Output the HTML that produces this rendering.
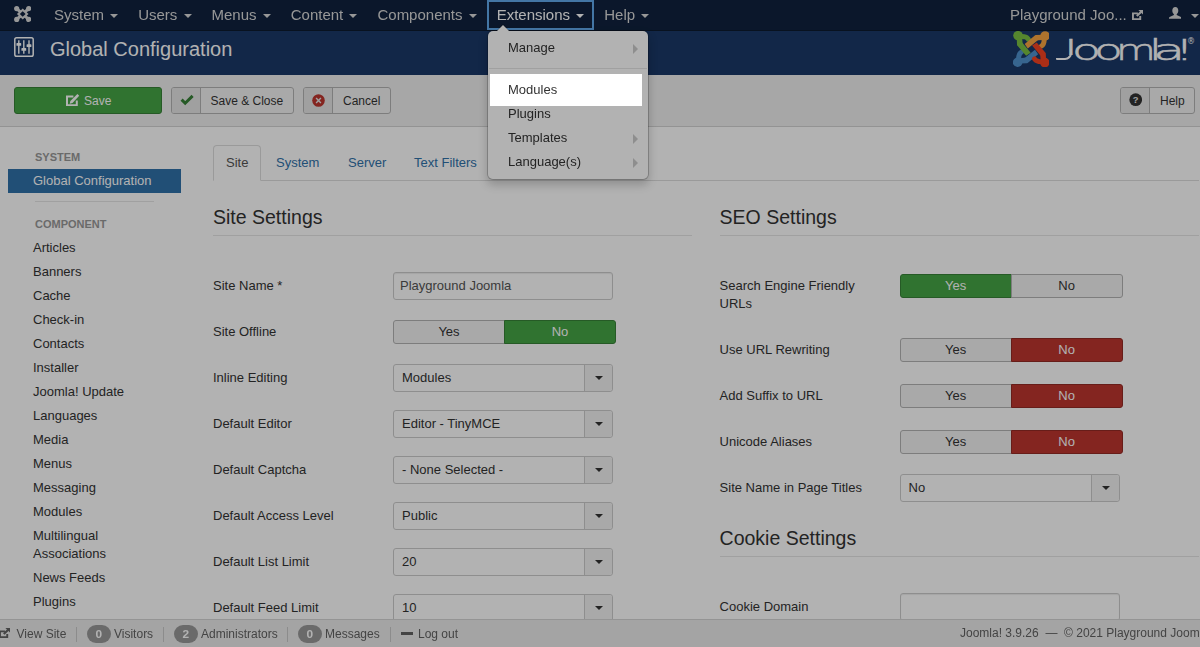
<!DOCTYPE html>
<html lang="en">
<head>
<meta charset="utf-8">
<title>Playground Joomla - Administration - Global Configuration</title>
<style>
*{box-sizing:content-box}
html,body{margin:0;padding:0}
body{width:1200px;height:647px;overflow:hidden;position:relative;background:#fff;font-family:"Liberation Sans",Arial,Helvetica,sans-serif;font-size:13px;line-height:18px;color:#333}
a{color:#3071a9;text-decoration:none}
#page{position:absolute;left:0;top:0;width:1216px;height:647px;overflow:hidden}

/* ---------- navbar ---------- */
.navbar{will-change:transform;position:absolute;left:0;top:0;width:1216px;height:30px;background:#10223e;border-bottom:1px solid #0c1a2f}
.navbar .brand{position:absolute;left:13.6px;top:5.9px;width:17.4px;height:16px}
.nav{position:absolute;left:44px;top:0;margin:0;padding:0;list-style:none;white-space:nowrap;font-size:0}
.nav>li{display:inline-block;font-size:15px;line-height:18px;padding:6px 10px;color:#d9d9d9;position:relative}
.caret{display:inline-block;width:0;height:0;vertical-align:top;margin-top:8px;margin-left:2px;border-top:4px solid #d9d9d9;border-left:4px solid transparent;border-right:4px solid transparent}
.nav>li.open{color:#fff}
.nav>li.open .caret{border-top-color:#fff}
.nav>li.open:after{content:"";position:absolute;left:0;top:0;right:0;bottom:0;border:2px solid #61a9ec}
.navright{position:absolute;top:0;right:0;height:30px}
.nvi{position:absolute}
.sitename{position:absolute;left:1010px;top:6px;font-size:15px;line-height:18px;color:#d9d9d9;white-space:nowrap}

/* ---------- header ---------- */
.header{position:absolute;left:0;top:31px;width:1216px;height:44px;background:#1a3867}
.header h1{position:absolute;left:50px;top:0;margin:0;font-size:20px;line-height:36px;font-weight:normal;color:#fff;white-space:nowrap}
.header .ticon{position:absolute;left:13.8px;top:6.2px;width:20px;height:20px}
.jlogo{position:absolute;left:1012.7px;top:-0.2px;width:36.8px;height:36.2px}
.wordmark{position:absolute;left:0;top:1px;font-family:"DejaVu Sans Light","DejaVu Sans",sans-serif;font-weight:200;font-size:29.2px;line-height:36px;color:#fff;-webkit-text-stroke:0.55px #fff;white-space:nowrap}
.jfoot{position:absolute;left:1055.6px;top:17.6px;width:14.2px;height:9px;border-bottom:2.5px solid #fff;border-right:2.8px solid #fff;border-radius:0 0 7px 1px}
.wordmark span{position:absolute;top:0;transform-origin:0 0}
.wordmark .reg{font-family:"DejaVu Sans",sans-serif;font-weight:400;font-size:8px;line-height:10px;top:5px;-webkit-text-stroke:0}

/* ---------- subhead / toolbar ---------- */
.subhead{position:absolute;left:0;top:75px;width:1216px;height:51px;background:#f0f0f0;border-bottom:1px solid #d3d3d3}
.tbtn{position:absolute;top:12px;height:25px;line-height:25px;font-size:12px;border:1px solid #b3b3b3;border-radius:3px;background:#f3f3f3;color:#333;white-space:nowrap;overflow:hidden}
.tbtn .ib{position:absolute;left:0;top:0;width:28px;height:25px;background:#e6e6e6;border-right:1px solid #b3b3b3}
.tbtn .tx{position:absolute;top:1px}
.tbtn svg{position:absolute}

/* ---------- sidebar ---------- */
.sidebar{position:absolute;left:8px;top:145px;width:173px}
.sidebar ul{margin:0;padding:0;list-style:none}
.sidebar li{padding:3px 25px 3px 25px;line-height:18px;color:#333}
.sidebar li.nav-header{font-size:11px;font-weight:bold;color:#999;text-shadow:0 1px 0 rgba(255,255,255,.5);text-transform:uppercase;padding-left:27px;letter-spacing:0}
.sidebar li.active{background:#3071a9;color:#fff;padding-left:25px}
.sidebar li.divider{height:1px;padding:0;margin:8px 27px 9px 27px;background:#e5e5e5;border-bottom:1px solid #fff}

/* ---------- content ---------- */
.tabs{position:absolute;left:213px;top:145px;width:986px;height:35px;border-bottom:1px solid #ddd}
.tabs span{position:absolute;top:0;height:18px;padding:8px 12px;line-height:18px;color:#3071a9;border:1px solid transparent}
.tabs span.active{color:#555;background:#fff;border:1px solid #ddd;border-bottom-color:#fff;border-radius:4px 4px 0 0}
.col{position:absolute;top:199px}
.col1{left:213px;width:479px}
.col2{left:719.6px;width:479.4px}
legend,.legend{display:block;font-size:19.5px;line-height:36px;height:36px;color:#333;border-bottom:1px solid #e5e5e5;margin:0 0 36px 0;padding:0;white-space:nowrap}
.cg{position:relative;min-height:28px;margin-bottom:18px}
.cg label{display:block;width:160px;padding:5px 0;line-height:18px}
.cg .c{position:absolute;left:180px;top:0}
.inp{width:206px;height:18px;padding:4px 6px;border:1px solid #ccc;border-radius:3px;background:#fff;line-height:18px;color:#555;box-shadow:inset 0 1px 1px rgba(0,0,0,.075)}
.sel{position:relative;width:218px;height:26px;line-height:26px;border:1px solid #ccc;border-radius:3px;background:#fff;color:#333}
.sel .t{position:absolute;left:8px;top:0}
.sel .a{position:absolute;right:0;top:0;width:27px;height:26px;background:#f3f3f3;border-left:1px solid #ccc;border-radius:0 3px 3px 0}
.sel .a i{position:absolute;left:10px;top:11px;width:0;height:0;border-top:4px solid #333;border-left:4px solid transparent;border-right:4px solid transparent}
.tog{position:absolute;left:0;top:2px;width:224px;height:24px;white-space:nowrap;font-size:0}
.tog span{display:inline-block;width:110px;height:18px;padding:2px 0;line-height:18px;font-size:13px;text-align:center;border:1px solid #b3b3b3;background:#f3f3f3;color:#333}
.tog span:first-child{border-radius:3px 0 0 3px}
.tog span:last-child{border-radius:0 3px 3px 0;margin-left:-1px}
.tog span.g{background:#46a546;border-color:#378137;color:#fff}
.tog span.r{background:#bd362f;border-color:#942a25;color:#fff}

/* ---------- status ---------- */
#status{will-change:transform;position:absolute;left:0;top:619px;width:1216px;height:27px;background:#ebebeb;border-top:1px solid #d4d4d4;font-size:12px;line-height:18px;color:#626262}
#status .sti{position:absolute}
#status .it{position:absolute;top:5px;white-space:nowrap}
#status .dv{position:absolute;top:7px;width:0;height:15px;border-left:1px solid #c9c9c9}
.badge{position:absolute;top:5px;height:14px;padding:2px 8.5px 1.5px;line-height:14px;font-size:11.844px;font-weight:bold;color:#fff;background:#999;border-radius:9px}

/* ---------- dropdown ---------- */
.dd{will-change:transform;position:absolute;left:486.6px;top:30px;width:160px;padding:5px 0;background:#fff;background-clip:padding-box;border:1px solid rgba(0,0,0,.2);border-radius:6px;box-shadow:0 5px 10px rgba(0,0,0,.2)}
.dd div.i{padding:3px 20px;line-height:18px;color:#333;position:relative}
.dd div.i.sub:after{content:"";position:absolute;right:10px;top:8px;border-style:solid;border-width:5px 0 5px 5px;border-color:transparent transparent transparent #ccc}
.dd div.d{height:1px;margin:8px 1px 8px;background:#e5e5e5;border-bottom:1px solid #fff}
.dd:before{content:"";position:absolute;left:8px;top:-7px;border-left:7px solid transparent;border-right:7px solid transparent;border-bottom:7px solid rgba(0,0,0,.2)}
.dd:after{content:"";position:absolute;left:9px;top:-6px;border-left:6px solid transparent;border-right:6px solid transparent;border-bottom:6px solid #fff}

/* ---------- overlay ---------- */
.spot{position:absolute;left:490px;top:74px;width:152px;height:32px;box-shadow:0 0 0 3000px rgba(0,0,0,.3);pointer-events:none;z-index:100}
</style>
</head>
<body>
<div id="page">

<div class="navbar">
  <svg class="brand" viewBox="0 0 17.4 16"><g stroke="#d9d9d9" stroke-width="3" stroke-linecap="round"><path d="M3 2.8L14.4 13.2M14.4 2.8L3 13.2"/></g><g fill="#d9d9d9"><circle cx="2.7" cy="2.6" r="2.6"/><circle cx="14.7" cy="2.6" r="2.6"/><circle cx="2.7" cy="13.4" r="2.6"/><circle cx="14.7" cy="13.4" r="2.6"/><path d="M8.7 2.6L14.5 8 8.7 13.4 2.9 8Z"/></g><path d="M8.7 5.3L11.6 8 8.7 10.7 5.8 8Z" fill="#10223e"/></svg>
  <ul class="nav">
    <li>System <b class="caret"></b></li><li>Users <b class="caret"></b></li><li>Menus <b class="caret"></b></li><li>Content <b class="caret"></b></li><li>Components <b class="caret"></b></li><li class="open">Extensions <b class="caret"></b></li><li>Help <b class="caret"></b></li>
  </ul>
  <div class="sitename">Playground Joo...</div><svg class="nvi" style="left:1131.6px;top:9.8px" width="11.5" height="10.2" viewBox="0 0 12 11" preserveAspectRatio="none"><path d="M6.2 3.7H1V10H8.6V6.6" fill="none" stroke="#d9d9d9" stroke-width="2"/><path d="M6.6 0H11.6V5L9.9 3.3 5.8 7.4 4.2 5.8 8.3 1.7Z" fill="#d9d9d9"/></svg><svg class="nvi" style="left:1168.6px;top:7.4px" width="12.6" height="11.8" viewBox="0 0 12.6 11.8"><path d="M6.3 0C8.2 0 9.3 1.5 9.3 3.6 9.3 5.2 8.6 6.5 7.7 7.2V8.1L12 9.9Q12.6 10.2 12.6 10.9V11.8H0V10.9Q0 10.2 0.6 9.9L4.9 8.1V7.2C4 6.5 3.3 5.2 3.3 3.6 3.3 1.5 4.4 0 6.3 0Z" fill="#d9d9d9"/></svg><b class="caret" style="position:absolute;left:1191px;top:6px;margin-left:0"></b>
</div>

<div class="header">
  <svg class="ticon" viewBox="0 0 20 20"><rect x="0.8" y="0.8" width="18.4" height="18.4" rx="1.8" fill="none" stroke="#fff" stroke-width="1.5"/><g stroke="#fff" stroke-width="1.4"><path d="M4.8 3.2V16.8M9.8 3.2V16.8M15 3.2V16.8"/></g><g fill="#fff"><rect x="2.4" y="6.1" width="4.8" height="2.7" rx=".6"/><rect x="7.4" y="11.1" width="4.8" height="2.7" rx=".6"/><rect x="12.6" y="7.3" width="4.8" height="2.7" rx=".6"/></g></svg>
  <h1>Global Configuration</h1>
  <svg class="jlogo" viewBox="0 0 36.8 36.8" preserveAspectRatio="none"><g transform="rotate(270 18.4 18.4)"><path d="M3.7,6 L4,14.2 Q4.1,14.6 4.5,15 L13.1,25.1 L17.7,22 L10,12.6 Q9.6,12 9.5,11.4 L9.1,6 Z" fill="#5091cd"/><path d="M5,5.4 L11,5.8 Q14.2,6.4 15.3,8.4" fill="none" stroke="#5091cd" stroke-width="5" stroke-linecap="round"/><circle cx="5" cy="4.7" r="4.8" fill="#5091cd"/></g><g transform="rotate(0 18.4 18.4)"><path d="M3.7,6 L4,14.2 Q4.1,14.6 4.5,15 L13.1,25.1 L17.7,22 L10,12.6 Q9.6,12 9.5,11.4 L9.1,6 Z" fill="#7ac143"/><path d="M5,5.4 L11,5.8 Q14.2,6.4 15.3,8.4" fill="none" stroke="#7ac143" stroke-width="5" stroke-linecap="round"/><circle cx="5" cy="4.7" r="4.8" fill="#7ac143"/></g><g transform="rotate(90 18.4 18.4)"><path d="M3.7,6 L4,14.2 Q4.1,14.6 4.5,15 L13.1,25.1 L17.7,22 L10,12.6 Q9.6,12 9.5,11.4 L9.1,6 Z" fill="#f9a541"/><path d="M5,5.4 L11,5.8 Q14.2,6.4 15.3,8.4" fill="none" stroke="#f9a541" stroke-width="5" stroke-linecap="round"/><circle cx="5" cy="4.7" r="4.8" fill="#f9a541"/></g><g transform="rotate(180 18.4 18.4)"><path d="M3.7,6 L4,14.2 Q4.1,14.6 4.5,15 L13.1,25.1 L17.7,22 L10,12.6 Q9.6,12 9.5,11.4 L9.1,6 Z" fill="#f44321"/><path d="M5,5.4 L11,5.8 Q14.2,6.4 15.3,8.4" fill="none" stroke="#f44321" stroke-width="5" stroke-linecap="round"/><circle cx="5" cy="4.7" r="4.8" fill="#f44321"/></g></svg>
  <div class="jfoot"></div><div class="wordmark"><span style="left:1064.0px;transform:scaleX(1.60);height:23.4px;overflow:hidden">J</span><span style="left:1071.6px;transform:scaleX(1.62)">o</span><span style="left:1093.6px;transform:scaleX(1.62)">o</span><span style="left:1115.5px;transform:scaleX(1.40)">m</span><span style="left:1148.6px;transform:scaleX(1.60)">l</span><span style="left:1153.2px;transform:scaleX(1.81)">a</span><span style="left:1174.5px;transform:scaleX(1.60)">!</span><span class="reg" style="left:1187px">®</span></div>
</div>

<div class="subhead">
  <div class="tbtn" style="left:14px;width:146px;background:#46a546;border-color:#378137;color:#fff"><svg style="left:51.2px;top:6.2px" width="13.4" height="12.2" viewBox="0 0 13.4 12.2"><path d="M7.4 2.6H1V11.2H10.8V6.4" fill="none" stroke="#fff" stroke-width="2"/><path d="M13.2 1.8L11.4 0 4.4 6.9 3.7 9.7 6.5 9Z" fill="#fff"/></svg><span class="tx" style="left:69px">Save</span></div>
  <div class="tbtn" style="left:171px;width:121px"><span class="ib"></span><svg style="left:7.5px;top:6px" width="14" height="12" viewBox="0 0 14 12"><path d="M1.6 5.6L5.2 9.2 12.6 1.9" fill="none" stroke="#378137" stroke-width="3"/></svg><span class="tx" style="left:38.5px">Save &amp; Close</span></div>
  <div class="tbtn" style="left:303px;width:86px"><span class="ib"></span><svg style="left:7.6px;top:5.6px" width="13" height="13" viewBox="0 0 13 13"><circle cx="6.5" cy="6.5" r="6.3" fill="#bd362f"/><path d="M4.1 4.1L8.9 8.9M8.9 4.1L4.1 8.9" stroke="#e6e6e6" stroke-width="1.4"/></svg><span class="tx" style="left:39px">Cancel</span></div>
  <div class="tbtn" style="left:1120px;width:73px"><span class="ib"></span><svg style="left:7.6px;top:5.2px" width="13.4" height="13.4" viewBox="0 0 13.4 13.4"><circle cx="6.7" cy="6.7" r="6.4" fill="#333"/><text x="6.7" y="10" text-anchor="middle" font-family="Liberation Sans,Arial,sans-serif" font-weight="bold" font-size="9.4" fill="#e6e6e6">?</text></svg><span class="tx" style="left:39px">Help</span></div>
</div>

<div class="sidebar">
  <ul>
    <li class="nav-header">System</li>
    <li class="active">Global Configuration</li>
    <li class="divider"></li>
    <li class="nav-header">Component</li>
    <li>Articles</li><li>Banners</li><li>Cache</li><li>Check-in</li><li>Contacts</li><li>Installer</li><li>Joomla! Update</li><li>Languages</li><li>Media</li><li>Menus</li><li>Messaging</li><li>Modules</li><li>Multilingual Associations</li><li>News Feeds</li><li>Plugins</li><li>Post-installation Messages</li>
  </ul>
</div>

<div class="tabs">
  <span class="active" style="left:0">Site</span>
  <span style="left:50px">System</span>
  <span style="left:122px">Server</span>
  <span style="left:188px">Text Filters</span>
</div>

<div class="col col1">
  <div class="legend">Site Settings</div>
  <div class="cg"><label>Site Name *</label><div class="c"><div class="inp">Playground Joomla</div></div></div>
  <div class="cg"><label>Site Offline</label><div class="c"><div class="tog"><span>Yes</span><span class="g">No</span></div></div></div>
  <div class="cg"><label>Inline Editing</label><div class="c"><div class="sel"><span class="t">Modules</span><span class="a"><i></i></span></div></div></div>
  <div class="cg"><label>Default Editor</label><div class="c"><div class="sel"><span class="t">Editor - TinyMCE</span><span class="a"><i></i></span></div></div></div>
  <div class="cg"><label>Default Captcha</label><div class="c"><div class="sel"><span class="t">- None Selected -</span><span class="a"><i></i></span></div></div></div>
  <div class="cg"><label>Default Access Level</label><div class="c"><div class="sel"><span class="t">Public</span><span class="a"><i></i></span></div></div></div>
  <div class="cg"><label>Default List Limit</label><div class="c"><div class="sel"><span class="t">20</span><span class="a"><i></i></span></div></div></div>
  <div class="cg"><label>Default Feed Limit</label><div class="c"><div class="sel"><span class="t">10</span><span class="a"><i></i></span></div></div></div>
</div>

<div class="col col2">
  <div class="legend">SEO Settings</div>
  <div class="cg"><label>Search Engine Friendly URLs</label><div class="c"><div class="tog"><span class="g">Yes</span><span>No</span></div></div></div>
  <div class="cg"><label>Use URL Rewriting</label><div class="c"><div class="tog"><span>Yes</span><span class="r">No</span></div></div></div>
  <div class="cg"><label>Add Suffix to URL</label><div class="c"><div class="tog"><span>Yes</span><span class="r">No</span></div></div></div>
  <div class="cg"><label>Unicode Aliases</label><div class="c"><div class="tog"><span>Yes</span><span class="r">No</span></div></div></div>
  <div class="cg"><label>Site Name in Page Titles</label><div class="c"><div class="sel"><span class="t">No</span><span class="a"><i></i></span></div></div></div>
  <div class="legend">Cookie Settings</div>
  <div class="cg"><label>Cookie Domain</label><div class="c"><div class="inp"></div></div></div>
</div>

<div id="status">
  <svg class="sti" style="left:-1.2px;top:8px" width="11.5" height="10.2" viewBox="0 0 12 11" preserveAspectRatio="none"><path d="M6.2 3.7H1V10H8.6V6.6" fill="none" stroke="#626262" stroke-width="2"/><path d="M6.6 0H11.6V5L9.9 3.3 5.8 7.4 4.2 5.8 8.3 1.7Z" fill="#626262"/></svg><span class="it" style="left:16.5px">View Site</span>
  <span class="dv" style="left:76px"></span>
  <span class="badge" style="left:87px">0</span>
  <span class="it" style="left:114px">Visitors</span>
  <span class="dv" style="left:163px"></span>
  <span class="badge" style="left:174px">2</span>
  <span class="it" style="left:201px">Administrators</span>
  <span class="dv" style="left:287px"></span>
  <span class="badge" style="left:298px">0</span>
  <span class="it" style="left:325px">Messages</span>
  <span class="dv" style="left:390px"></span>
  <span class="sti" style="left:401px;top:11.6px;width:12px;height:3.2px;background:#626262"></span><span class="it" style="left:418px">Log out</span>
  <span class="it" style="left:960px;top:4px">Joomla! 3.9.26 &nbsp;—&nbsp; © 2021 Playground Joomla</span>
</div>

<div class="dd">
  <div class="i sub">Manage</div>
  <div class="d"></div>
  <div class="i">Modules</div>
  <div class="i">Plugins</div>
  <div class="i sub">Templates</div>
  <div class="i sub">Language(s)</div>
</div>

<div class="spot"></div>
</div>
</body>
</html>
